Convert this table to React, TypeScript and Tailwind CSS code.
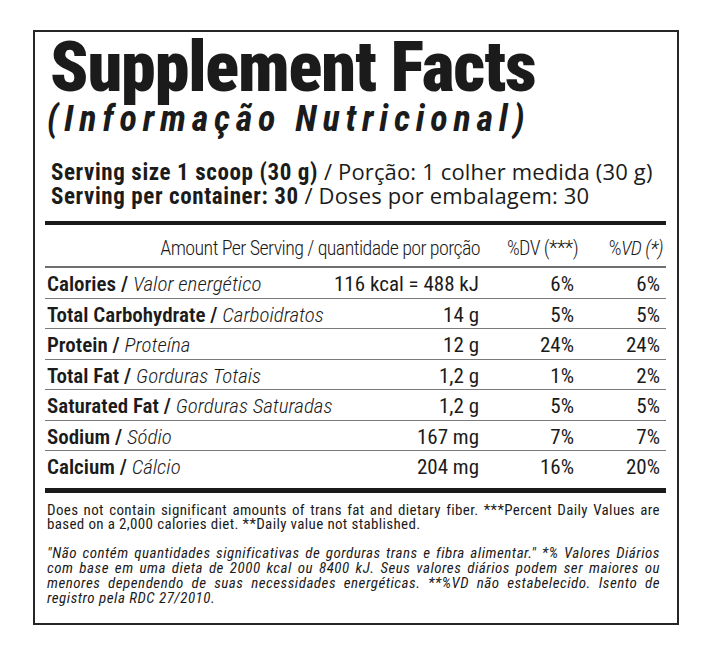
// Supplement Facts label

const ROWS = [
  { en: "Calories", pt: "Valor energético", amount: "116 kcal = 488 kJ", dv: "6%", vd: "6%" },
  { en: "Total Carbohydrate", pt: "Carboidratos", amount: "14 g", dv: "5%", vd: "5%" },
  { en: "Protein", pt: "Proteína", amount: "12 g", dv: "24%", vd: "24%" },
  { en: "Total Fat", pt: "Gorduras Totais", amount: "1,2 g", dv: "1%", vd: "2%" },
  { en: "Saturated Fat", pt: "Gorduras Saturadas", amount: "1,2 g", dv: "5%", vd: "5%" },
  { en: "Sodium", pt: "Sódio", amount: "167 mg", dv: "7%", vd: "7%" },
  { en: "Calcium", pt: "Cálcio", amount: "204 mg", dv: "16%", vd: "20%" },
];

const EN_NOTE = [
  "Does not contain significant amounts of trans fat and dietary fiber. ***Percent Daily Values are",
  "based on a 2,000 calories diet. **Daily value not stablished.",
];

const PT_NOTE = [
  "\"Não contém quantidades significativas de gorduras trans e fibra alimentar.\" *% Valores Diários",
  "com base em uma dieta de 2000 kcal ou 8400 kJ. Seus valores diários podem ser maiores ou",
  "menores dependendo de suas necessidades energéticas. **%VD não estabelecido. Isento de",
  "registro pela RDC 27/2010.",
];

function NoteLines({ lines, className }: { lines: string[]; className: string }) {
  return (
    <div className={className}>
      {lines.map((line, i) => (
        <div
          key={i}
          className={i < lines.length - 1 ? "text-justify [text-align-last:justify]" : "text-left"}
        >
          {line}
        </div>
      ))}
    </div>
  );
}

export default function App() {
  return (
    <div className="min-h-screen bg-white pt-[30px] pl-[33px] text-[#1b1b1b] font-['Roboto',sans-serif] font-stretch-condensed">
      <div className="w-[646px] border-2 border-[#262626] pl-[10px] pr-[11px] pb-[17px]">
        {/* Title */}
        <h1 className="pl-[5px] text-[70px] leading-[70px] font-black tracking-[-1.1px]">
          Supplement Facts
        </h1>
        <h2 className="mt-[1px] pl-[2px] text-[36px] leading-[33px] font-bold italic tracking-[5.8px]">
          (Informação Nutricional)
        </h2>

        {/* Serving */}
        <div className="mt-[24px] pl-[6px] text-[22px] leading-[22px]">
          <p>
            <span className="text-[23px] font-bold tracking-[0.6px]">Serving size 1 scoop (30 g)</span>
            <span className="font-['Open_Sans',sans-serif] font-stretch-normal tracking-[0.15px]"> / Porção: 1 colher medida (30 g)</span>
          </p>
          <p>
            <span className="text-[23px] font-bold tracking-[0.6px]">Serving per container: 30</span>
            <span className="font-['Open_Sans',sans-serif] font-stretch-normal tracking-[0.15px]"> / Doses por embalagem: 30</span>
          </p>
        </div>

        <div className="mt-[13px] h-[4px] bg-[#1b1b1b]" />

        {/* Table header */}
        <div className="flex items-end border-b-2 border-[#6f6f6f] pt-[13px] pb-[7px] text-[20px] leading-[21px] font-light tracking-[-0.6px]">
          <div className="flex-1 text-right">Amount Per Serving / quantidade por porção</div>
          <div className="w-[98px] text-right">%DV (***)</div>
          <div className="w-[85px] text-right">
            %<span className="italic">VD (*)</span>
          </div>
          <div className="w-[3px]" />
        </div>

        {/* Rows */}
        {ROWS.map((row, i) => (
          <div
            key={row.en}
            className={
              i < ROWS.length - 1
                ? "flex items-start border-b-[1.5px] border-[#7a7a7a] pt-[6px] pb-[2.5px] pl-[2px] text-[21px] leading-[21px]"
                : "flex items-start pt-[6px] pb-[10px] pl-[2px] text-[21px] leading-[21px]"
            }
          >
            <div className="flex-1">
              <span className="font-semibold">{row.en} / </span>
              <span className="font-light italic">{row.pt}</span>
            </div>
            <div className="text-right whitespace-nowrap">{row.amount}</div>
            <div className="w-[95px] text-right">{row.dv}</div>
            <div className="w-[86px] text-right">{row.vd}</div>
            <div className="w-[6px]" />
          </div>
        ))}

        <div className="h-[5px] bg-[#1b1b1b]" />

        {/* Notes */}
        <NoteLines
          lines={EN_NOTE}
          className="mt-[10px] pl-[2px] pr-[6px] text-[15px] leading-[14px] tracking-[0.35px]"
        />
        <NoteLines
          lines={PT_NOTE}
          className="mt-[15px] pl-[2px] pr-[6px] text-[15px] leading-[15px] italic tracking-[0.5px]"
        />
      </div>
    </div>
  );
}
